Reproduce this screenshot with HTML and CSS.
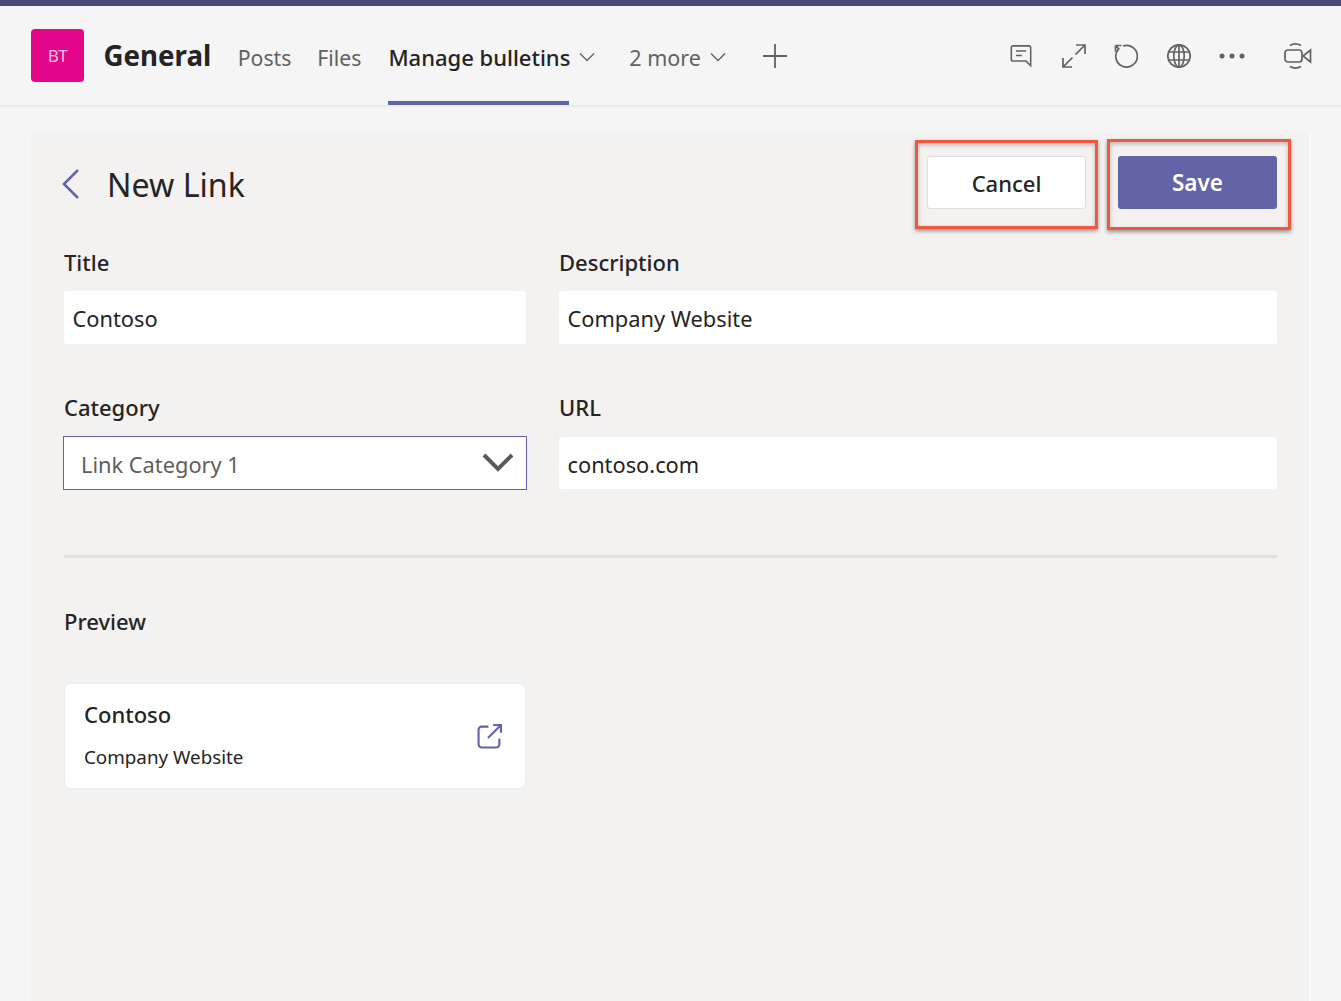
FILE: index.html
```html
<!DOCTYPE html>
<html lang="en">
<head>
<meta charset="utf-8">
<title>New Link</title>
<link rel="stylesheet" href="styles.css">
</head>
<body>
<div class="topbar"></div>
<header class="header">
  <div class="avatar">BT</div>
  <h1 class="channel">General</h1>
  <nav class="tabs">
    <a class="tab tab-posts">Posts</a>
    <a class="tab tab-files">Files</a>
    <a class="tab tab-active">Manage bulletins
      <svg class="chev" viewBox="0 0 16 10"><path d="M1 1.5 8 8.5 15 1.5"/></svg>
    </a>
    <a class="tab tab-more">2 more
      <svg class="chev" viewBox="0 0 16 10"><path d="M1 1.5 8 8.5 15 1.5"/></svg>
    </a>
    <svg class="plus" viewBox="0 0 24 24"><path d="M12 0V24M0 12H24"/></svg>
  </nav>
  <div class="tools">
    <svg class="tool" viewBox="0 0 24 26"><path d="M3.500 2H20.500A2 2 0 0 1 22.500 4V23.500L17.500 18.500H3.500A2 2 0 0 1 1.500 16.500V4A2 2 0 0 1 3.500 2ZM6.500 7.500H17.500M6.500 12.500H13"/></svg>
    <svg class="tool" viewBox="0 0 24 24"><path d="M14 1H23V10M23 1 13.500 10.500M1 14V23H10M1 23 10.500 13.500"/></svg>
    <svg class="tool tool-refresh" viewBox="0 0 24 24"><path d="M9 2A10.800 10.800 0 1 1 4.700 4.800L1.500 1.500M1.500 1.500H7.500M1.500 1.500V7.500"/></svg>
    <svg class="tool" viewBox="0 0 24 24"><circle cx="12" cy="12" r="11.200"/><ellipse cx="12" cy="12" rx="5.200" ry="11.200"/><path d="M1.500 8H22.500M1.500 16H22.500M12 .8V23.200"/></svg>
    <svg class="tool dots" viewBox="0 0 26 6"><circle cx="3" cy="3" r="2.500"/><circle cx="13" cy="3" r="2.500"/><circle cx="23" cy="3" r="2.500"/></svg>
    <svg class="tool video" viewBox="0 0 28 28"><rect x="1" y="8" width="17" height="12" rx="3"/><path d="M19 14 26.500 8V20ZM6 3.500A11 11 0 0 1 17 3.500M6 24.500A11 11 0 0 0 17 24.500"/></svg>
  </div>
</header>
<main class="panel">
  <div class="panel-head">
    <svg class="back" viewBox="0 0 20 32"><path d="M17 2 3 16 17 30"/></svg>
    <h2 class="panel-title">New Link</h2>
    <div class="actions">
      <button class="btn btn-cancel">Cancel</button>
      <button class="btn btn-save">Save</button>
    </div>
  </div>
  <div class="form">
    <div class="field">
      <div class="label">Title</div>
      <div class="input">Contoso</div>
    </div>
    <div class="field">
      <div class="label">Description</div>
      <div class="input">Company Website</div>
    </div>
    <div class="field field-low">
      <div class="label">Category</div>
      <div class="select">
        <span>Link Category 1</span>
        <svg class="select-chev" viewBox="0 0 32 20"><path d="M2 3 16 17 30 3"/></svg>
      </div>
    </div>
    <div class="field field-low">
      <div class="label">URL</div>
      <div class="input">contoso.com</div>
    </div>
  </div>
  <hr class="divider">
  <div class="label preview-label">Preview</div>
  <div class="card">
    <div class="card-text">
      <div class="card-title">Contoso</div>
      <div class="card-desc">Company Website</div>
    </div>
    <svg class="open" viewBox="0 0 24 24"><path d="M11 2.500H4.500A3 3 0 0 0 1.500 5.500V19.500A3 3 0 0 0 4.500 22.500H18.500A3 3 0 0 0 21.500 19.500V14M15.500 1H23V8.500M23 1 10.500 13.500"/></svg>
  </div>
</main>
</body>
</html>
```
FILE: styles.css
```css
* { box-sizing: border-box; }
html, body { margin: 0; height: 100%; }
body {
  background: #f5f5f5;
  font-family: "Noto Sans", "Open Sans", sans-serif;
  color: #252423;
  overflow: hidden;
}
.topbar { height: 6px; background: #484a77; }
.header {
  height: 101px;
  display: flex;
  align-items: center;
  padding: 0 29px 0 31px;
  border-bottom: 2px solid #ebebeb;
}
.avatar {
  width: 53px;
  height: 53px;
  border-radius: 4px;
  background: #e3068a;
  color: #fbc1e1;
  font-size: 17px;
  letter-spacing: -.5px;
  display: flex;
  align-items: center;
  justify-content: center;
}
.channel {
  margin: -2px 0 0 19.500px;
  font-size: 27.700px;
  font-weight: 700;
  line-height: 40px;
  color: #242424;
}
.tabs { display: flex; align-items: center; height: 100%; margin-left: 26.500px; }
.tab {
  height: 100%;
  display: flex;
  align-items: center;
  gap: 9px;
  padding-top: 3px;
  font-size: 21.200px;
  color: #616161;
  white-space: nowrap;
}
.tab-files { margin-left: 26px; }
.tab-active {
  position: relative;
  margin-left: 27px;
  font-size: 22px;
  font-weight: 500;
  color: #242424;
}
.tab-active::after {
  content: "";
  position: absolute;
  left: 0;
  width: 181px;
  bottom: 0;
  height: 4px;
  background: #6264a7;
}
.tab-more { margin-left: 34px; font-size: 21.500px; }
.chev { width: 16px; height: 10px; fill: none; stroke: #616161; stroke-width: 1.300; }
.plus { width: 24px; height: 24px; margin-left: 37px; fill: none; stroke: #616161; stroke-width: 1.800; }
.tools { margin-left: auto; display: flex; align-items: center; }
.tool { width: 24px; height: 24px; margin-left: 29px; fill: none; stroke: #616161; stroke-width: 1.700; }
.tool-refresh { margin-left: 28px; }
.dots { width: 26px; height: 6px; margin-left: 28px; fill: #616161; stroke: none; }
.video { width: 28px; height: 28px; margin-left: 39px; }
.panel {
  width: 1280px;
  height: 868px;
  margin: 26px 0 0 31px;
  padding: 0 32px 0 33px;
  background: #f3f2f1;
  border-right: 2px solid #fafafa;
}
.panel-head { height: 104px; display: flex; align-items: center; }
.back { width: 20px; height: 32px; margin: -3px 0 0 -3px; fill: none; stroke: #6264a7; stroke-width: 2.500; }
.panel-title { margin: 0 0 0 26px; font-size: 32.200px; font-weight: 400; line-height: 44px; }
.actions { margin-left: auto; display: flex; gap: 32px; margin-top: -5px; }
.btn {
  position: relative;
  width: 159px;
  height: 53px;
  border-radius: 3px;
  font: 600 22px "Noto Sans", sans-serif;
  padding: 0;
}
.btn::after {
  content: "";
  position: absolute;
  border: 3px solid #ee583c;
  box-shadow: 0 2px 4px rgba(0,0,0,.4), inset 0 2px 4px rgba(0,0,0,.25);
  pointer-events: none;
}
.btn-cancel { background: #fff; border: 1px solid #e1dfdd; color: #252423; font-weight: 500; }
.btn-cancel::after { inset: -17px -13px -21px -13px; }
.btn-save { background: #6264a7; border: 0; color: #fff; font-size: 22.500px; padding-bottom: 1px; }
.btn-save::after { inset: -17px -14px -21px -11px; }
.form {
  display: grid;
  grid-template-columns: 462px 718px;
  column-gap: 33px;
  row-gap: 48px;
  margin-top: 10px;
}
.label { font-size: 22px; font-weight: 500; line-height: 30px; color: #252423; }
.field .label { margin-bottom: 14px; }
.field-low .label { margin-bottom: 15px; }
.input {
  height: 53px;
  background: #fff;
  border-radius: 3px;
  padding: 2px 8.500px 0;
  display: flex;
  align-items: center;
  font-size: 21.800px;
  color: #252423;
}
.field-low .input { height: 52px; }
.select {
  height: 54px;
  margin: -1px -1px 0;
  background: #fff;
  border: 1px solid #6264a7;
  padding: 2px 12px 0 17px;
  display: flex;
  align-items: center;
  justify-content: space-between;
  font-size: 21.800px;
  color: #605e5c;
}
.select-chev { width: 32px; height: 20px; fill: none; stroke: #5a5a5a; stroke-width: 4; margin-top: -4px; }
.divider { margin: 65px 0 0; border: 0; height: 3px; background: #e1dfdd; }
.preview-label { margin-top: 48px; }
.card {
  width: 462px;
  height: 106px;
  margin-top: 47px;
  background: #fff;
  border: 1px solid #edebe9;
  border-radius: 7px;
  padding: 0 23px 0 19px;
  display: flex;
  align-items: center;
  justify-content: space-between;
}
.card-text { margin-top: -3px; }
.card-title { font-size: 22px; font-weight: 500; line-height: 30px; color: #252423; }
.card-desc { font-size: 18.800px; line-height: 26px; margin-top: 15px; color: #252423; }
.open { width: 25px; height: 25px; fill: none; stroke: #6264a7; stroke-width: 2; }
```
